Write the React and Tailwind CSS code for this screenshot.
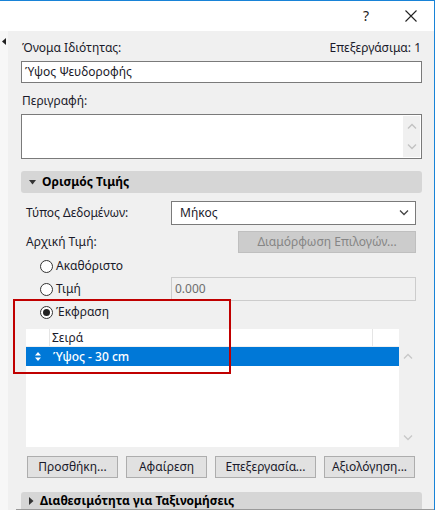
import React from "react";

function Radio({ checked }) {
  return (
    <span className="w-[13px] h-[13px] rounded-full border border-[#333] bg-white flex items-center justify-center shrink-0">
      {checked && <span className="w-[7px] h-[7px] rounded-full bg-[#222]" />}
    </span>
  );
}

function Chevron({ up, className }) {
  return (
    <svg width="10" height="6" viewBox="0 0 10 6" className={className}>
      <path
        d={up ? "M1 5.5 L5 1.5 L9 5.5" : "M1 0.5 L5 4.5 L9 0.5"}
        fill="none"
        stroke="currentColor"
        strokeWidth="1.3"
      />
    </svg>
  );
}

function SectionHeader({ open, children, className = "h-[22px] rounded-[3px]" }) {
  return (
    <div className={`${className} bg-[#d6d6d6] flex items-center pl-[8px] gap-[6px] font-bold text-black`}>
      {open ? (
        <svg width="7" height="5" viewBox="0 0 7 5"><path d="M0 0 H7 L3.5 4.5 Z" fill="#333" /></svg>
      ) : (
        <svg width="5" height="8" viewBox="0 0 5 8"><path d="M0 0 V8 L4.5 4 Z" fill="#333" /></svg>
      )}
      <span>{children}</span>
    </div>
  );
}

export default function App() {
  return (
    <div
      className="relative w-[435px] h-[510px] overflow-hidden bg-[#f0f0f0] text-[12px] leading-[16px] text-[#1a1a2a] border-t border-r border-[#1883d7]"
      style={{ fontFamily: "'Noto Sans', 'Open Sans', sans-serif" }}
    >
      {/* title bar */}
      <div className="h-[30px] bg-white flex items-center justify-end">
        <span className="text-[14px] text-[#222] w-[20px] text-center mr-[29px]">?</span>
        <svg width="12" height="12" viewBox="0 0 12 12" className="mr-[17px]">
          <path d="M0.5 0.5 L11.5 11.5 M11.5 0.5 L0.5 11.5" stroke="#222" strokeWidth="1.1" />
        </svg>
      </div>

      <div className="flex">
        {/* side strip */}
        <div className="w-[8px] bg-[#f7f7f7] pt-[7px] flex justify-center">
          <svg width="4" height="7" viewBox="0 0 4 7"><path d="M4 0 V7 L0 3.5 Z" fill="#222" /></svg>
        </div>

        <div className="flex-1 pl-[13px] pr-[12px] pt-[9px]">
          <div className="flex justify-between pl-[1px]">
            <span>Όνομα Ιδιότητας:</span>
            <span className="pr-[1px]">Επεξεργάσιμα: 1</span>
          </div>
          <div className="mt-[5px] h-[22px] bg-white border border-[#7a7a7a] flex items-center px-[3px]">
            Ύψος Ψευδοροφής
          </div>

          <div className="mt-[10px] pl-[1px]">Περιγραφή:</div>
          <div className="mt-[5px] h-[45px] bg-white border border-[#7a7a7a] flex justify-end pr-[1px] py-[1px]">
            <div className="w-[17px] bg-[#f0f0f0] flex flex-col items-center justify-between py-[7px] text-[#c2c2c2]">
              <Chevron up />
              <Chevron />
            </div>
          </div>

          <div className="mt-[12px]">
            <SectionHeader open>Ορισμός Τιμής</SectionHeader>
          </div>

          <div className="pl-[5px] pr-[6px]">
            <div className="mt-[8px] flex items-center">
              <span className="w-[145px]">Τύπος Δεδομένων:</span>
              <div className="flex-1 h-[24px] bg-white border border-[#7a7a7a] flex items-center justify-between px-[8px]">
                <span>Μήκος</span>
                <Chevron className="text-[#444] mr-[-2px]" />
              </div>
            </div>

            <div className="mt-[6px] flex items-center justify-between">
              <span>Αρχική Τιμή:</span>
              <div className="w-[178px] h-[22px] bg-[#cccccc] border border-[#bfbfbf] flex items-center justify-center text-[#858585]">
                Διαμόρφωση Επιλογών...
              </div>
            </div>

            <div className="mt-[5px] flex items-center gap-[3px] pl-[14px] h-[16px]">
              <Radio />
              <span>Ακαθόριστο</span>
            </div>

            <div className="mt-[3px] flex items-center">
              <div className="w-[145px] flex items-center gap-[3px] pl-[14px]">
                <Radio />
                <span>Τιμή</span>
              </div>
              <div className="flex-1 h-[24px] bg-[#f0f0f0] border border-[#cccccc] flex items-center px-[3px] text-[#6d6d6d]">
                0.000
              </div>
            </div>

            <div className="mt-[3px] flex items-center gap-[3px] pl-[14px] h-[16px]">
              <Radio checked />
              <span>Έκφραση</span>
            </div>

            <div className="mt-[9px] flex">
              <div className="w-[373px] h-[118px] bg-white">
                <div className="h-[18px] flex border-b border-[#f0f0f0]">
                  <div className="w-[24px] border-r border-[#e5e5e5]" />
                  <div className="w-[323px] border-r border-[#e5e5e5] pl-[2px] leading-[18px]">Σειρά</div>
                </div>
                <div className="h-[19px] bg-[#0078d7] text-white flex items-center">
                  <div className="w-[24px] flex justify-center">
                    <svg width="6" height="9" viewBox="0 0 6 9">
                      <path d="M0 3.5 L3 0 L6 3.5 Z M0 5.5 L3 9 L6 5.5 Z" fill="white" />
                    </svg>
                  </div>
                  <span className="pl-[3px] font-medium">Ύψος - 30 cm</span>
                </div>
              </div>
              <div className="w-[17px] flex flex-col items-center justify-between pt-[24px] pb-[6px] text-[#c8c8c8]">
                <Chevron up />
                <Chevron />
              </div>
            </div>

            <div className="mt-[9px] flex justify-between pl-[1px] pr-[1px]">
              {[
                ["Προσθήκη...", "w-[91px]"],
                ["Αφαίρεση", "w-[81px]"],
                ["Επεξεργασία...", "w-[101px]"],
                ["Αξιολόγηση...", "w-[91px]"],
              ].map(([label, w]) => (
                <div
                  key={label}
                  className={`${w} h-[22px] bg-[#e1e1e1] border border-[#adadad] flex items-center justify-center text-[#1a1a2a]`}
                >
                  {label}
                </div>
              ))}
            </div>
          </div>

          <div className="mt-[14px]">
            <SectionHeader className="h-[17px] rounded-t-[3px]">Διαθεσιμότητα για Ταξινομήσεις</SectionHeader>
          </div>
          <div className="-ml-[5px] mr-[-12px] h-[1px] bg-[#9a9a9a]" />
        </div>
      </div>

      {/* highlight box */}
      <div className="absolute left-[13px] top-[298px] w-[218px] h-[75px] border-2 border-[#c00000]" />
    </div>
  );
}
